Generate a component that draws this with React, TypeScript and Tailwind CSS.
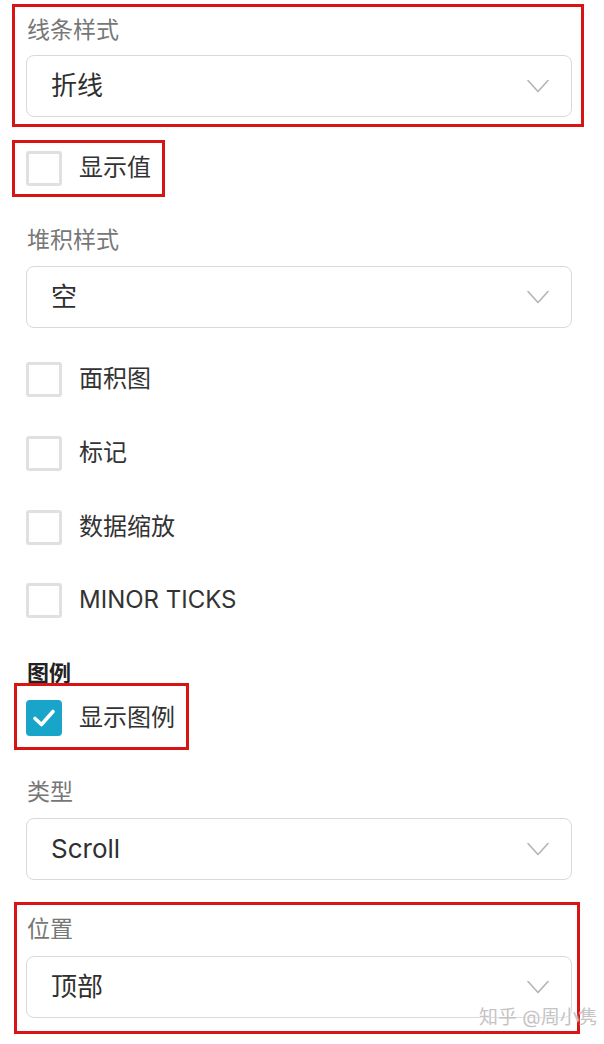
import { ReactNode } from "react";

const font = { fontFamily: 'Inter, "Noto Sans CJK SC", sans-serif' };

function Chevron() {
  return (
    <svg width="22" height="14" viewBox="0 0 22 14" fill="none" className="shrink-0">
      <polyline points="1,1.5 11,12.5 21,1.5" stroke="#b4b4b4" strokeWidth="1.6" strokeLinejoin="round" strokeLinecap="round" />
    </svg>
  );
}

function Label({ children, className = "" }: { children: ReactNode; className?: string }) {
  return (
    <div className={`h-[24px] text-[23px] leading-[24px] text-[#777777] ${className}`}>
      <span className="relative -top-[2px]">{children}</span>
    </div>
  );
}

function Select({ value, className = "" }: { value: string; className?: string }) {
  return (
    <div className={`flex h-[62px] w-[546px] items-center justify-between rounded-[8px] border-[1.5px] border-[#d9d9d9] bg-white pl-[24px] pr-[22px] ${className}`}>
      <span className="text-[26px] leading-none text-[#2f2f2f]">{value}</span>
      <Chevron />
    </div>
  );
}

function Check({ label, checked = false, className = "" }: { label: string; checked?: boolean; className?: string }) {
  return (
    <div className={`flex h-[36px] items-center gap-[17px] ${className}`}>
      {checked ? (
        <div className="flex h-[36px] w-[36px] items-center justify-center rounded-[4px] bg-[#19a4c9]">
          <svg width="24" height="20" viewBox="0 0 24 20" fill="none">
            <polyline points="3,10.5 9.5,16.5 21,3.5" stroke="white" strokeWidth="3.6" strokeLinecap="round" strokeLinejoin="round" />
          </svg>
        </div>
      ) : (
        <div className="h-[35px] w-[36px] rounded-[3px] border-[3px] border-[#e0e0e0] bg-white" />
      )}
      <span className="text-[24px] leading-none text-[#333333]">{label}</span>
    </div>
  );
}

function Box({ className }: { className: string }) {
  return <div className={`pointer-events-none absolute border-[3px] border-[#d81515] ${className}`} />;
}

export default function App() {
  return (
    <div className="relative h-[1044px] w-[604px] overflow-hidden bg-white" style={font}>
      <div className="flex flex-col pl-[26px]">
        <Label className="mt-[20px] pl-[1px]">线条样式</Label>
        <Select value="折线" className="mt-[11px]" />
        <Check label="显示值" className="mt-[33px]" />

        <Label className="mt-[44px] pl-[1px]">堆积样式</Label>
        <Select value="空" className="mt-[12px]" />

        <Check label="面积图" className="mt-[33px]" />
        <Check label="标记" className="mt-[38px]" />
        <Check label="数据缩放" className="mt-[38px]" />
        <Check label="MINOR TICKS" className="mt-[37px]" />

        <div className="mt-[45px] h-[24px] pl-[1px] text-[22px] font-bold leading-[24px] text-[#222222]">
          <span className="relative -top-[2px]">图例</span>
        </div>
        <Check label="显示图例" checked className="mt-[13px]" />

        <Label className="mt-[46px] pl-[1px]">类型</Label>
        <Select value="Scroll" className="mt-[12px]" />

        <Label className="mt-[39px] pl-[1px]">位置</Label>
        <Select value="顶部" className="mt-[13px]" />
      </div>

      <Box className="left-[12px] top-[4px] h-[123px] w-[572px]" />
      <Box className="left-[12px] top-[140px] h-[57px] w-[153px]" />
      <Box className="left-[14px] top-[683px] h-[67px] w-[175px]" />
      <Box className="left-[14px] top-[902px] h-[132px] w-[566px]" />

      <div
        className="pointer-events-none absolute left-[479px] top-[1006px] text-[19px] leading-[24px] text-[#c4c4c4]"
        style={{ textShadow: "0 0 2px #fff, 0 0 2px #fff" }}
      >
        知乎 @周小隽
      </div>
    </div>
  );
}
